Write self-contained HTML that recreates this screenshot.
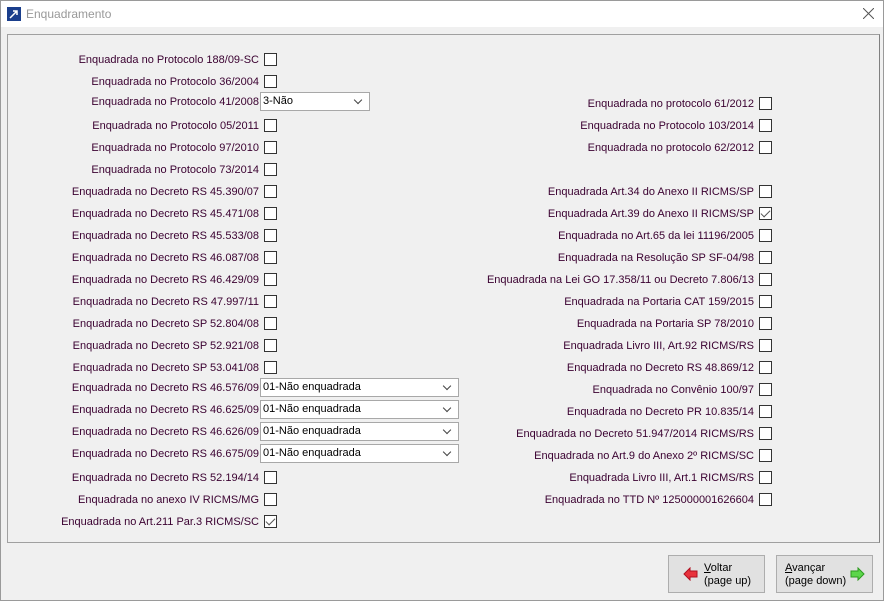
<!DOCTYPE html>
<html><head><meta charset="utf-8"><style>
*{margin:0;padding:0;box-sizing:border-box}
body{width:888px;height:601px;background:#fff;font-family:"Liberation Sans","DejaVu Sans",sans-serif;font-size:11px;position:relative;overflow:hidden}
.win{position:absolute;left:0;top:0;width:884px;height:601px;border:1px solid #9a9a9a;background:#f0f0f0}
.title{position:absolute;left:0;top:0;width:882px;height:26px;background:#fff}
.title span{position:absolute;left:25px;top:6px;color:#999;font-size:12px}
.panel{position:absolute;left:6px;top:33px;width:873px;height:509px;border:1px solid #a0a0a0;border-right-color:#808080;border-bottom-color:#a0a0a0}
.l{position:absolute;text-align:right;color:#3a0030;white-space:nowrap;line-height:13px;margin-top:1px}
.L{right:629px}
.R{right:134px}
.cb{position:absolute;width:13px;height:13px;border:1px solid #333;background:#fff}
.cb.ck::after{content:"";position:absolute;left:3px;top:0px;width:4px;height:8px;border:solid #555;border-width:0 1px 1px 0;transform:rotate(45deg)}
.cbL{left:264px}.cbR{left:759px}
.combo{position:absolute;left:260px;height:19px;border:1px solid #a8a8a8;background:#fff;color:#000;padding:1px 2px;line-height:15px}
.combo::after{content:"";position:absolute;right:8px;top:4px;width:5px;height:5px;border:solid #444;border-width:0 1px 1px 0;transform:rotate(45deg)}
.btn{position:absolute;top:555px;width:97px;height:38px;border:1px solid #adadad;background:#e1e1e1;font-size:11px;line-height:13px;color:#000}
.btn u{text-decoration:underline}
</style></head><body>
<div class="win">
<div class="title">
<svg style="position:absolute;left:6px;top:6px" width="14" height="14"><rect width="14" height="14" fill="#1a3e8c"/><path d="M3 11 L10 4 M6 4 H10 V8" stroke="#fff" stroke-width="1.5" fill="none"/></svg>
<span>Enquadramento</span>
<svg style="position:absolute;left:862px;top:7px" width="11" height="11"><path d="M0 0L11 11M11 0L0 11" stroke="#555" stroke-width="1"/></svg>
</div>
<div class="panel"></div>
</div>

<div class="l L" style="top:53px">Enquadrada no Protocolo 188/09-SC</div><div class="cb cbL" style="top:53px"></div>
<div class="l L" style="top:75px">Enquadrada no Protocolo 36/2004</div><div class="cb cbL" style="top:75px"></div>
<div class="l L" style="top:95px">Enquadrada no Protocolo 41/2008</div><div class="combo" style="top:92px;width:110px">3-Não</div>
<div class="l L" style="top:119px">Enquadrada no Protocolo 05/2011</div><div class="cb cbL" style="top:119px"></div>
<div class="l L" style="top:141px">Enquadrada no Protocolo 97/2010</div><div class="cb cbL" style="top:141px"></div>
<div class="l L" style="top:163px">Enquadrada no Protocolo 73/2014</div><div class="cb cbL" style="top:163px"></div>
<div class="l L" style="top:185px">Enquadrada no Decreto RS 45.390/07</div><div class="cb cbL" style="top:185px"></div>
<div class="l L" style="top:207px">Enquadrada no Decreto RS 45.471/08</div><div class="cb cbL" style="top:207px"></div>
<div class="l L" style="top:229px">Enquadrada no Decreto RS 45.533/08</div><div class="cb cbL" style="top:229px"></div>
<div class="l L" style="top:251px">Enquadrada no Decreto RS 46.087/08</div><div class="cb cbL" style="top:251px"></div>
<div class="l L" style="top:273px">Enquadrada no Decreto RS 46.429/09</div><div class="cb cbL" style="top:273px"></div>
<div class="l L" style="top:295px">Enquadrada no Decreto RS 47.997/11</div><div class="cb cbL" style="top:295px"></div>
<div class="l L" style="top:317px">Enquadrada no Decreto SP 52.804/08</div><div class="cb cbL" style="top:317px"></div>
<div class="l L" style="top:339px">Enquadrada no Decreto SP 52.921/08</div><div class="cb cbL" style="top:339px"></div>
<div class="l L" style="top:361px">Enquadrada no Decreto SP 53.041/08</div><div class="cb cbL" style="top:361px"></div>
<div class="l L" style="top:381px">Enquadrada no Decreto RS 46.576/09</div><div class="combo" style="top:378px;width:199px">01-Não enquadrada</div>
<div class="l L" style="top:403px">Enquadrada no Decreto RS 46.625/09</div><div class="combo" style="top:400px;width:199px">01-Não enquadrada</div>
<div class="l L" style="top:425px">Enquadrada no Decreto RS 46.626/09</div><div class="combo" style="top:422px;width:199px">01-Não enquadrada</div>
<div class="l L" style="top:447px">Enquadrada no Decreto RS 46.675/09</div><div class="combo" style="top:444px;width:199px">01-Não enquadrada</div>
<div class="l L" style="top:471px">Enquadrada no Decreto RS 52.194/14</div><div class="cb cbL" style="top:471px"></div>
<div class="l L" style="top:493px">Enquadrada no anexo IV RICMS/MG</div><div class="cb cbL" style="top:493px"></div>
<div class="l L" style="top:515px">Enquadrada no Art.211 Par.3 RICMS/SC</div><div class="cb cbL ck" style="top:515px"></div>

<div class="l R" style="top:97px">Enquadrada no protocolo 61/2012</div><div class="cb cbR" style="top:97px"></div>
<div class="l R" style="top:119px">Enquadrada no Protocolo 103/2014</div><div class="cb cbR" style="top:119px"></div>
<div class="l R" style="top:141px">Enquadrada no protocolo 62/2012</div><div class="cb cbR" style="top:141px"></div>
<div class="l R" style="top:185px">Enquadrada Art.34 do Anexo II RICMS/SP</div><div class="cb cbR" style="top:185px"></div>
<div class="l R" style="top:207px">Enquadrada Art.39 do Anexo II RICMS/SP</div><div class="cb cbR ck" style="top:207px"></div>
<div class="l R" style="top:229px">Enquadrada no Art.65 da lei 11196/2005</div><div class="cb cbR" style="top:229px"></div>
<div class="l R" style="top:251px">Enquadrada na Resolução SP SF-04/98</div><div class="cb cbR" style="top:251px"></div>
<div class="l R" style="top:273px">Enquadrada na Lei GO 17.358/11 ou Decreto 7.806/13</div><div class="cb cbR" style="top:273px"></div>
<div class="l R" style="top:295px">Enquadrada na Portaria CAT 159/2015</div><div class="cb cbR" style="top:295px"></div>
<div class="l R" style="top:317px">Enquadrada na Portaria SP 78/2010</div><div class="cb cbR" style="top:317px"></div>
<div class="l R" style="top:339px">Enquadrada Livro III, Art.92 RICMS/RS</div><div class="cb cbR" style="top:339px"></div>
<div class="l R" style="top:361px">Enquadrada no Decreto RS 48.869/12</div><div class="cb cbR" style="top:361px"></div>
<div class="l R" style="top:383px">Enquadrada no Convênio 100/97</div><div class="cb cbR" style="top:383px"></div>
<div class="l R" style="top:405px">Enquadrada no Decreto PR 10.835/14</div><div class="cb cbR" style="top:405px"></div>
<div class="l R" style="top:427px">Enquadrada no Decreto 51.947/2014 RICMS/RS</div><div class="cb cbR" style="top:427px"></div>
<div class="l R" style="top:449px">Enquadrada no Art.9 do Anexo 2º RICMS/SC</div><div class="cb cbR" style="top:449px"></div>
<div class="l R" style="top:471px">Enquadrada Livro III, Art.1 RICMS/RS</div><div class="cb cbR" style="top:471px"></div>
<div class="l R" style="top:493px">Enquadrada no TTD Nº 125000001626604</div><div class="cb cbR" style="top:493px"></div>

<div class="btn" style="left:668px">
<svg style="position:absolute;left:14px;top:11px" width="16" height="14"><path d="M1 7 L7 1 V4 H14 V10 H7 V13 Z" fill="#e8323c" stroke="#b01020" stroke-width="1"/></svg>
<div style="position:absolute;left:35px;top:6px"><u>V</u>oltar<br>(page up)</div></div>
<div class="btn" style="left:776px">
<div style="position:absolute;left:8px;top:6px"><u>A</u>vançar<br>(page down)</div>
<svg style="position:absolute;left:72px;top:11px" width="16" height="14"><path d="M15 7 L9 1 V4 H2 V10 H9 V13 Z" fill="#5cd64a" stroke="#2e9a20" stroke-width="1"/></svg></div>
</body></html>
